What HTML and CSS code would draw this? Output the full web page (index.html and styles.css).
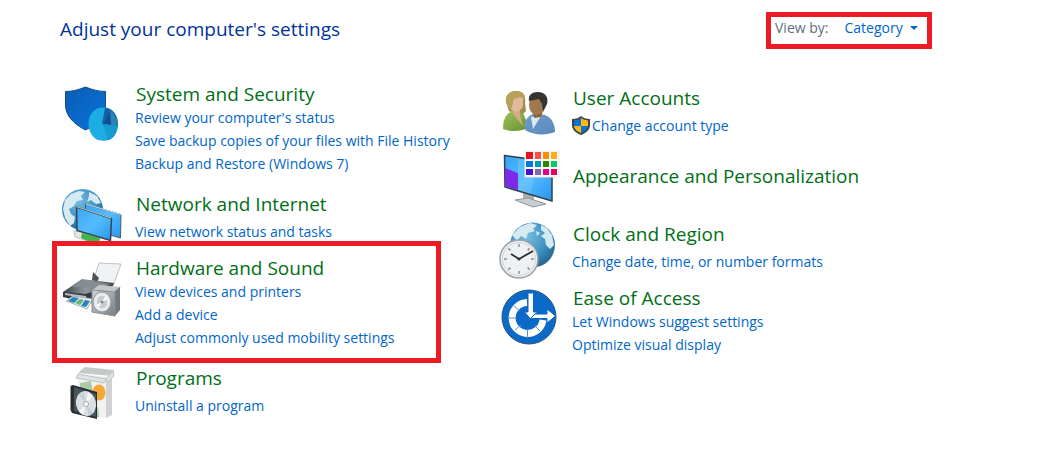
FILE: index.html
```html
<!DOCTYPE html>
<html lang="en">
<head>
    <meta charset="UTF-8">
    <meta name="viewport" content="width=device-width, initial-scale=1.0">
    <title>Control Panel</title>
    <link rel="stylesheet" href="styles.css">
</head>
<body>
    <header class="top-bar">
        <h1>Adjust your computer's settings</h1>
        <div class="view-by">
            <label for="viewBy">View by:</label>
            <select id="viewBy">
                <option>Category</option>
            </select>
            <svg class="arrow" viewBox="0 0 8 4" aria-hidden="true"><path d="M0 0h8L4 4z" fill="#0066cc"/></svg>
        </div>
    </header>

    <main class="categories">
        <div class="column">
            <section class="category">
                <svg class="icon" viewBox="0 0 60 60" aria-hidden="true">
                    <defs>
                        <linearGradient id="shieldBlue" x1="0" y1="0" x2="1" y2="1">
                            <stop offset="0" stop-color="#0b5cb4"/>
                            <stop offset="1" stop-color="#0a74dc"/>
                        </linearGradient>
                    </defs>
                    <path d="M5.500 9.500C13 9.500 19 7.500 25.500 5C32 7.500 38 9.500 45.500 9.500V23C45.500 35 37 42 25.500 48C14 42 5.500 34 5.500 23z" fill="url(#shieldBlue)" stroke="#164a85"/>
                    <ellipse cx="44.500" cy="42" rx="13.500" ry="16.500" fill="#1278ad"/>
                    <ellipse cx="42" cy="42" rx="13.500" ry="16.500" fill="#1cade4"/>
                    <path d="M42 42L45 26C53 27 57 34 57.500 44z" fill="#1261a8"/>
                    <path d="M43 42L50 28C54 31 57 37 57.500 44z" fill="#2e83b5"/>
                    <path d="M43 42L50 28L51 43z" fill="#0f4f96"/>
                    <path d="M43 42L57.500 44C57 52 53 57 48 58z" fill="#159bcf"/>
                </svg>
                <div class="text">
                    <h2><a href="#">System and Security</a></h2>
                    <ul>
                        <li><a href="#">Review your computer's status</a></li>
                        <li><a href="#">Save backup copies of your files with File History</a></li>
                        <li><a href="#">Backup and Restore (Windows 7)</a></li>
                    </ul>
                </div>
            </section>

            <section class="category single">
                <svg class="icon" viewBox="0 0 60 60" aria-hidden="true">
                    <defs>
                        <radialGradient id="globe" cx=".4" cy=".3" r=".75">
                            <stop offset="0" stop-color="#75bce2"/>
                            <stop offset=".6" stop-color="#3b8fc0"/>
                            <stop offset="1" stop-color="#245f8c"/>
                        </radialGradient>
                        <linearGradient id="screen" x1="0" y1="0" x2="1" y2="1">
                            <stop offset="0" stop-color="#36a4f4"/>
                            <stop offset=".5" stop-color="#55bcff"/>
                            <stop offset="1" stop-color="#2696ee"/>
                        </linearGradient>
                    </defs>
                    <circle cx="22.500" cy="17.500" r="20.500" fill="url(#globe)"/>
                    <path d="M5 8L11 2L19 -1L25 0L21 4L23 8L17 9L14 14L9 17L11 22L15 25L14 31L10 34L5 26L3 17zM29 0L37 4L41 11L36 12L31 8L27 10L29 4z" fill="#d6eaf2"/>
                    <path d="M14 39L21 40L38 47L42 52L34 51L15 45z" fill="#e3e7e4" stroke="#b9c3ba"/>
                    <path d="M22 41L40 46L39 52L32 51L21 46z" fill="#3fb64a"/>
                    <path d="M25.500 12L61 22.500L60.500 46L50 43L26 36z" fill="url(#screen)" stroke="#505b64"/>
                    <path d="M26 12L61 22.500" stroke="#c9d9e4" fill="none"/>
                    <path d="M16.500 15L51.500 26.500L50.500 48.500L17 38.500z" fill="url(#screen)" stroke="#39444c" stroke-width="1.500"/>
                    <path d="M16 14.500L51 26" stroke="#b7c3ca" fill="none"/>
                </svg>
                <div class="text">
                    <h2><a href="#">Network and Internet</a></h2>
                    <ul>
                        <li><a href="#">View network status and tasks</a></li>
                    </ul>
                </div>
            </section>

            <section class="category highlight">
                <svg class="icon" viewBox="0 0 60 60" aria-hidden="true">
                    <defs>
                        <linearGradient id="metal" x1="0" y1="0" x2="1" y2="1">
                            <stop offset="0" stop-color="#d2d5d7"/>
                            <stop offset="1" stop-color="#777c80"/>
                        </linearGradient>
                        <linearGradient id="printer" x1="0" y1="0" x2="1" y2="0">
                            <stop offset="0" stop-color="#3b4147"/>
                            <stop offset=".45" stop-color="#92989c"/>
                            <stop offset="1" stop-color="#3e454a"/>
                        </linearGradient>
                    </defs>
                    <path d="M39 7L61 8L53 30L33 25z" fill="#f0f2f3" stroke="#c0c4c7"/>
                    <path d="M33 16L39 22L37 26L32 24z" fill="#4c5359"/>
                    <path d="M3 36L22 23L54 27L49 38L25 43L4 40z" fill="url(#printer)"/>
                    <path d="M22 24L50 28L40 32L12 31z" fill="#858c92"/>
                    <path d="M3 36L25 38L42 33L41 46L28 47L3 41z" fill="#343a40"/>
                    <path d="M5 37L26 40V42L5 39z" fill="#b7bdc1"/>
                    <path d="M13 40L33 43L27 53L6 45z" fill="#e3edef" stroke="#a7b3bb"/>
                    <path d="M13 41L19 42L14 47L8 45zM25 44L30 45L26 51L21 50z" fill="#2885bb"/>
                    <path d="M20 43L24 44L20 49L15 47z" fill="#69b47d"/>
                    <path d="M32 34L39 29L61 31L56 36z" fill="#c3c7c9"/>
                    <path d="M55 35L60 31V54L55 60z" fill="#72777b"/>
                    <path d="M32 34L55 36V60L32 56z" fill="url(#metal)" stroke="#8b9093"/>
                    <ellipse cx="42" cy="46" rx="9" ry="10" fill="#e6e8e9" stroke="#92979b"/>
                    <ellipse cx="42" cy="46" rx="6" ry="7" fill="#c9cccd" stroke="#f7f7f7"/>
                    <path d="M42 46L46 39L48 43zM42 46L38 53L36 49z" fill="#f6f7f8"/>
                    <circle cx="42" cy="46" r="1.500" fill="#85898c"/>
                </svg>
                <div class="text">
                    <h2><a href="#">Hardware and Sound</a></h2>
                    <ul>
                        <li><a href="#">View devices and printers</a></li>
                        <li><a href="#">Add a device</a></li>
                        <li><a href="#">Adjust commonly used mobility settings</a></li>
                    </ul>
                </div>
            </section>

            <section class="category single">
                <svg class="icon" viewBox="0 0 60 60" aria-hidden="true">
                    <path d="M18 7L25 1L54 4L52 10z" fill="#c5c9ca"/>
                    <path d="M18 8L52 11V49L46 52L18 46z" fill="#f2f2f1"/>
                    <path d="M46 14L52 10V49L46 52z" fill="#cfd2d3"/>
                    <path d="M18 8L46 13L44 17L16 12zM46 13L53 5L54 10L48 16z" fill="#dfe1e2" stroke="#bfc3c5"/>
                    <path d="M20 17L31 15L33 27L20 24zM30 42L38 41L39 51L31 51z" fill="#abcaa9"/>
                    <ellipse cx="39" cy="26.500" rx="6.500" ry="8" fill="#f3a936"/>
                    <path d="M30 22L38 33L28 36z" fill="#aabd76"/>
                    <path d="M10.500 20L13 19L37 26V53L12 47L10.500 44z" fill="#262d33"/>
                    <path d="M14 21L36 28V51L14 45z" fill="#4a545b"/>
                    <ellipse cx="26" cy="37.500" rx="10" ry="12.500" transform="rotate(-12 26 37.500)" fill="#dcdfe1"/>
                    <path d="M26 38L19 29L24 26zM26 38L33 47L29 50z" fill="#c3d0d7"/>
                    <path d="M26 38L28 26L33 30zM26 38L23 49L19 46z" fill="#f5f6f6"/>
                    <circle cx="26" cy="38" r="2.500" fill="#fff" stroke="#9da7ac"/>
                </svg>
                <div class="text">
                    <h2><a href="#">Programs</a></h2>
                    <ul>
                        <li><a href="#">Uninstall a program</a></li>
                    </ul>
                </div>
            </section>
        </div>

        <div class="column column-right">
            <section class="category single">
                <svg class="icon" viewBox="0 0 60 60" aria-hidden="true">
                    <defs>
                        <linearGradient id="greenTop" x1="0" y1="0" x2="1" y2="1">
                            <stop offset="0" stop-color="#9dc35c"/>
                            <stop offset="1" stop-color="#668f2d"/>
                        </linearGradient>
                        <linearGradient id="blueTop" x1="0" y1="0" x2="1" y2="1">
                            <stop offset="0" stop-color="#739dcc"/>
                            <stop offset="1" stop-color="#5989bd"/>
                        </linearGradient>
                    </defs>
                    <path d="M9 16C8 8 14 5 19 5C27 5 29 10 28 16L29 25L24 30L12 25z" fill="#a48d47"/>
                    <path d="M6 43C6 32 10 27 16 25L26 27L32 41C25 46 14 46 6 43z" fill="url(#greenTop)"/>
                    <path d="M16 22H23V29L26 40L16 28z" fill="#d8aa8b"/>
                    <path d="M11 13L17 9L26 12V20C24 26 16 28 12 21z" fill="#e1b99c"/>
                    <path d="M9 17C8 9 13 5 19 5C26 5 29 10 28 15L24 11L17 13L14 24z" fill="#b7a159"/>
                    <path d="M28 44C26 35 31 30 37 27L48 29C55 32 58 38 58 46C48 50 36 49 28 44z" fill="url(#blueTop)"/>
                    <path d="M34 31L44 30L36 43z" fill="#dce9f3"/>
                    <path d="M37 23L46 25L44 31L37 32z" fill="#8c6337"/>
                    <ellipse cx="39.500" cy="19" rx="7.500" ry="10" fill="#a0784d"/>
                    <path d="M32 15C31 9 35 6 41 6C48 6 52 11 50 18L46 26L45 18L42 13z" fill="#353430"/>
                </svg>
                <div class="text">
                    <h2><a href="#">User Accounts</a></h2>
                    <ul>
                        <li>
                            <a href="#" class="with-shield">
                                <svg class="shield" viewBox="0 0 18 19" aria-hidden="true">
                                    <path d="M9 0C11 2 14 3 18 3V9C18 14 14 17 9 19C4 17 0 14 0 9V3C4 3 7 2 9 0z" fill="#40444a"/>
                                    <path d="M9 2C7 3.500 5 4 2 4.500V10H9z" fill="#0d75d1"/>
                                    <path d="M9 2C11 3.500 13 4 16 4.500V10H9z" fill="#fdb913"/>
                                    <path d="M2 10H9V17C5 15.500 2.500 13.500 2 10z" fill="#fdb913"/>
                                    <path d="M9 10H16C15.500 13.500 13 15.500 9 17z" fill="#0d75d1"/>
                                </svg>Change account type</a>
                        </li>
                    </ul>
                </div>
            </section>

            <section class="category title-only">
                <svg class="icon" viewBox="0 0 60 60" aria-hidden="true">
                    <path d="M26 42L37 45V52H26z" fill="#a9b0b5"/>
                    <path d="M18 50L31 48L49 54L36 57z" fill="#c9ced2" stroke="#8e979d"/>
                    <path d="M7.500 5.500L55 12V51L8 37z" fill="url(#screen)" stroke="#333f4c" stroke-width="1.500"/>
                    <path d="M8 18L21 23V40L8 36z" fill="#7c2be8"/>
                    <path d="M21 9L40 11L34 44L21 40z" fill="#8fd3ff" opacity=".3"/>
                    <path d="M28 1H62V27H28z" fill="#fff" stroke="#e6e6e6"/>
                    <path d="M29 2h7v7h-7z" fill="#e81123"/>
                    <path d="M38 2h6v7h-6z" fill="#ff4d4d"/>
                    <path d="M46 2h6v7h-6z" fill="#ff8c00"/>
                    <path d="M54 2h6v7h-6z" fill="#ffab1d"/>
                    <path d="M29 11h7v6h-7z" fill="#0078d7"/>
                    <path d="M38 11h6v6h-6z" fill="#0099bc"/>
                    <path d="M46 11h6v6h-6z" fill="#2d8500"/>
                    <path d="M54 11h6v6h-6z" fill="#00cc6a"/>
                    <path d="M29 19h7v6h-7z" fill="#4d12d0"/>
                    <path d="M38 19h6v6h-6z" fill="#8764b8"/>
                    <path d="M46 19h6v6h-6z" fill="#e3008c"/>
                    <path d="M54 19h6v6h-6z" fill="#ea005e"/>
                </svg>
                <div class="text">
                    <h2><a href="#">Appearance and Personalization</a></h2>
                </div>
            </section>

            <section class="category single">
                <svg class="icon" viewBox="0 0 60 60" aria-hidden="true">
                    <circle cx="35.500" cy="23" r="22.500" fill="url(#globe)"/>
                    <path d="M15 13L23 5L33 1L40 3L36 7L38 9L31 11L29 17L24 14L20 19zM44 3L50 6L55 13L57 23L53 27L49 23L48 17L44 14L48 11L44 8zM39 9L43 11L40 14z" fill="#d5e9f1"/>
                    <circle cx="22" cy="37" r="19" fill="#e9edf0" stroke="#9aa3ab" stroke-width="1.500"/>
                    <circle cx="22" cy="37" r="16.500" fill="#eef0f2" stroke="#d1d6da"/>
                    <path d="M22 22v3M22 49v3M7 37h3M34 37h3M11.400 26.400l2 2M30.600 45.600l2 2M11.400 47.600l2-2M30.600 28.400l2-2" stroke="#8c9299" stroke-width="1.500"/>
                    <path d="M14 32L22 37L36 29" fill="none" stroke="#292f35" stroke-width="1.800"/>
                    <circle cx="22" cy="37" r="1.500" fill="#292f35"/>
                </svg>
                <div class="text">
                    <h2><a href="#">Clock and Region</a></h2>
                    <ul>
                        <li><a href="#">Change date, time, or number formats</a></li>
                    </ul>
                </div>
            </section>

            <section class="category">
                <svg class="icon" viewBox="0 0 60 60" aria-hidden="true">
                    <circle cx="32" cy="31" r="27" fill="#0b69c7" stroke="#27527c"/>
                    <path d="M30 16.500A15.500 15.500 0 1 0 46 34" fill="none" stroke="#fff" stroke-width="7"/>
                    <path d="M11 32H19M17 20L23 25M18 44L24 39M30.500 43V52M43 45L37 39" stroke="#5a93c6"/>
                    <path d="M31 7H36.500V26H40.500L33.500 33L27.500 26H31z" fill="#fff" stroke="#0b69c7"/>
                    <path d="M38 28H50V23L58.500 30L50 37V32.500H33.500z" fill="#fff" stroke="#0b69c7"/>
                </svg>
                <div class="text">
                    <h2><a href="#">Ease of Access</a></h2>
                    <ul>
                        <li><a href="#">Let Windows suggest settings</a></li>
                        <li><a href="#">Optimize visual display</a></li>
                    </ul>
                </div>
            </section>
        </div>
    </main>
</body>
</html>
```
FILE: styles.css
```css
* {
    box-sizing: border-box;
}

body {
    margin: 0;
    background: #fff;
    font-family: "Segoe UI", "Open Sans", "Noto Sans", sans-serif;
    font-size: 14px;
}

h1, h2, ul {
    margin: 0;
    padding: 0;
    font-weight: normal;
}

ul {
    list-style: none;
}

a {
    color: #0066cc;
    text-decoration: none;
}

a:hover {
    text-decoration: underline;
}

.top-bar {
    display: flex;
    justify-content: space-between;
    align-items: flex-start;
    padding: 12px 106px 0 60px;
}

h1 {
    color: #003399;
    font-size: 19px;
    line-height: 34px;
}

.view-by {
    display: flex;
    align-items: center;
    width: 166px;
    height: 37px;
    padding: 0 9px 6px 4px;
    border: 5px solid #ed1c24;
    color: #5f6b7d;
}

.view-by select {
    appearance: none;
    margin-left: 16px;
    padding: 0;
    border: none;
    background: transparent;
    color: #0066cc;
    font: inherit;
    cursor: pointer;
}

.arrow {
    width: 8px;
    height: 4px;
    margin-left: auto;
}

.categories {
    display: grid;
    grid-template-columns: minmax(0, 437px) minmax(0, 1fr);
    padding: 33px 60px 24px;
}

.column-right {
    padding-top: 4px;
}

.category {
    display: flex;
    align-items: flex-start;
    gap: 16px;
    padding-bottom: 17px;
}

.category ul {
    margin-left: -1px;
}

.category.single {
    padding-bottom: 13px;
}

.single ul {
    margin-top: 4px;
}

.title-only {
    min-height: 72px;
}

.title-only .text {
    padding-top: 14px;
}

.icon {
    flex: none;
    width: 60px;
    height: 60px;
    margin-bottom: -12px;
    overflow: visible;
}

h2 {
    font-size: 19px;
    line-height: 24px;
}

h2 a {
    color: #006f15;
}

li {
    line-height: 23px;
}

.with-shield {
    display: flex;
    align-items: center;
    gap: 2px;
}

.shield {
    width: 18px;
    height: 19px;
}

/* red frame around the category */
.highlight {
    position: relative;
}

.highlight::after {
    content: "";
    position: absolute;
    top: -15px;
    right: 56px;
    bottom: 3px;
    left: -8px;
    border: 5px solid #ed1c24;
    pointer-events: none;
}
```
